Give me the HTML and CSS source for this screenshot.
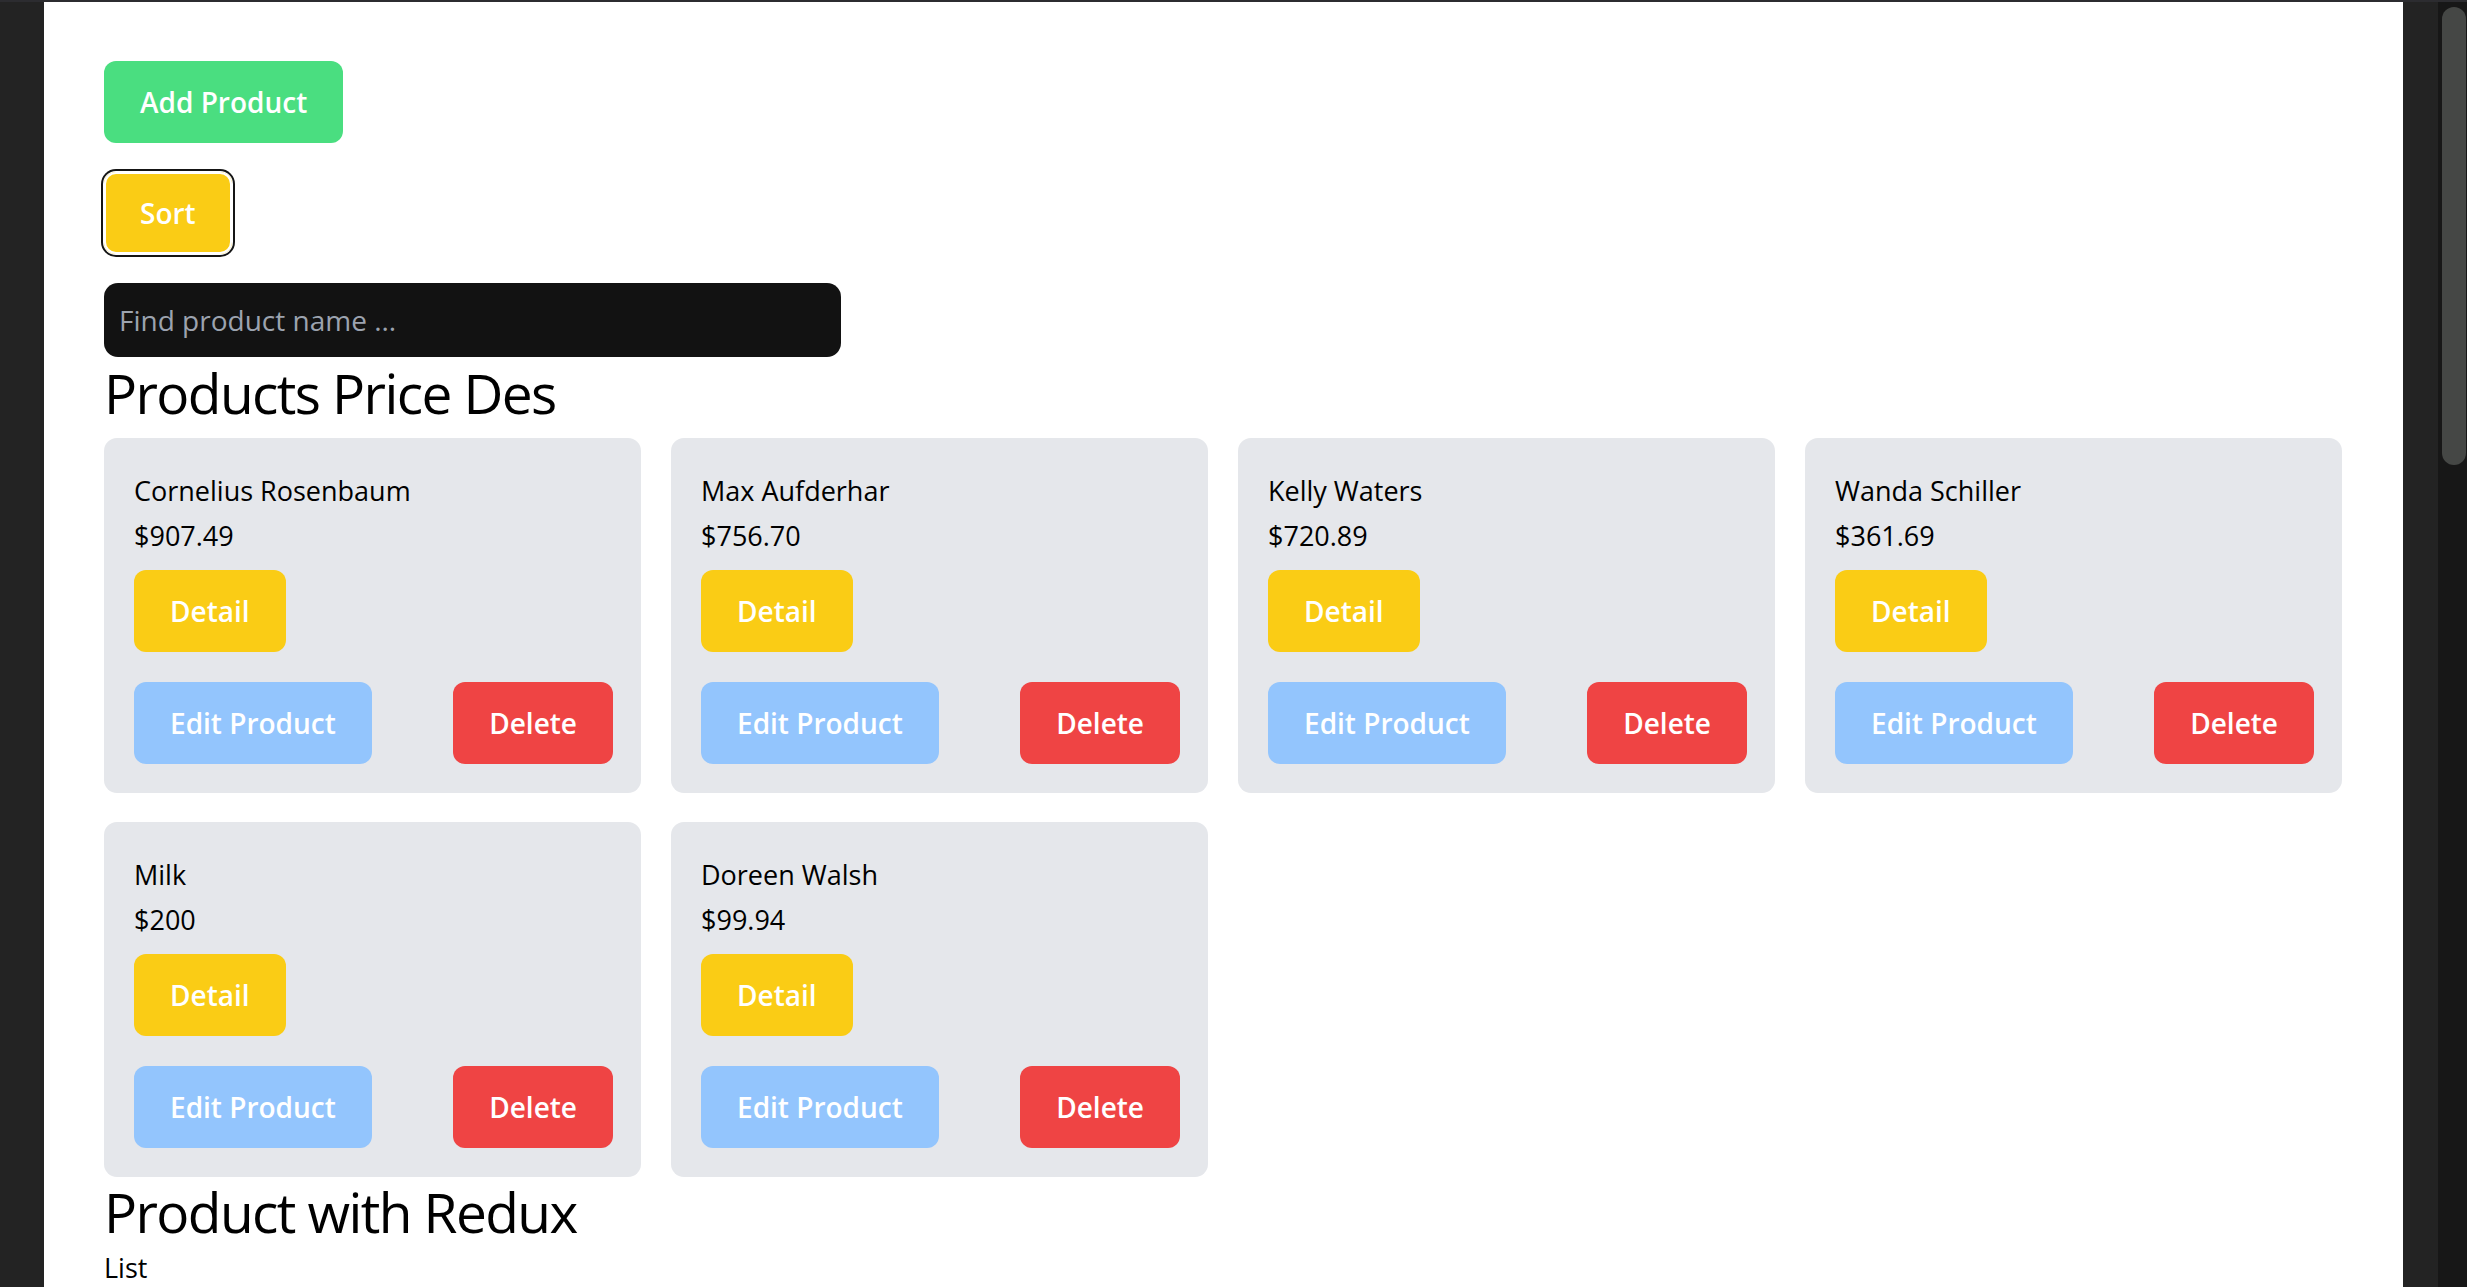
FILE: index.html
```html
<!DOCTYPE html>
<html lang="en">
<head>
<meta charset="utf-8">
<title>Products</title>
<link rel="stylesheet" href="styles.css">
</head>
<body>
<div class="window">
  <div class="gutter"></div>
  <main class="page">
    <div class="toolbar">
      <button class="btn btn-green">Add Product</button>
      <button class="btn btn-yellow btn-focus">Sort</button>
      <input class="search" type="text" placeholder="Find product name ...">
    </div>
    <h1 class="title">Products Price Des</h1>
    <div class="grid">
      <div class="card">
        <p class="line">Cornelius Rosenbaum</p>
        <p class="line">$907.49</p>
        <button class="btn btn-yellow btn-detail">Detail</button>
        <div class="actions">
          <button class="btn btn-blue">Edit Product</button>
          <button class="btn btn-red">Delete</button>
        </div>
      </div>
      <div class="card">
        <p class="line">Max Aufderhar</p>
        <p class="line">$756.70</p>
        <button class="btn btn-yellow btn-detail">Detail</button>
        <div class="actions">
          <button class="btn btn-blue">Edit Product</button>
          <button class="btn btn-red">Delete</button>
        </div>
      </div>
      <div class="card">
        <p class="line">Kelly Waters</p>
        <p class="line">$720.89</p>
        <button class="btn btn-yellow btn-detail">Detail</button>
        <div class="actions">
          <button class="btn btn-blue">Edit Product</button>
          <button class="btn btn-red">Delete</button>
        </div>
      </div>
      <div class="card">
        <p class="line">Wanda Schiller</p>
        <p class="line">$361.69</p>
        <button class="btn btn-yellow btn-detail">Detail</button>
        <div class="actions">
          <button class="btn btn-blue">Edit Product</button>
          <button class="btn btn-red">Delete</button>
        </div>
      </div>
      <div class="card">
        <p class="line">Milk</p>
        <p class="line">$200</p>
        <button class="btn btn-yellow btn-detail">Detail</button>
        <div class="actions">
          <button class="btn btn-blue">Edit Product</button>
          <button class="btn btn-red">Delete</button>
        </div>
      </div>
      <div class="card">
        <p class="line">Doreen Walsh</p>
        <p class="line">$99.94</p>
        <button class="btn btn-yellow btn-detail">Detail</button>
        <div class="actions">
          <button class="btn btn-blue">Edit Product</button>
          <button class="btn btn-red">Delete</button>
        </div>
      </div>
    </div>
    <h1 class="title title-second">Product with Redux</h1>
    <p class="line">List</p>
  </main>
  <div class="side"></div>
  <div class="scrollbar"><div class="thumb"></div></div>
</div>
</body>
</html>
```
FILE: styles.css
```css
* { box-sizing: border-box; }

html, body {
  margin: 0;
  padding: 0;
  height: 100%;
  overflow: hidden;
  background: #232323;
}

body {
  font-family: "Open Sans", "Noto Sans", sans-serif;
  color: #000;
}

.window {
  display: flex;
  height: 100vh;
  border-top: 2px solid #2c2c30;
}

.gutter {
  width: 44px;
  flex: none;
  background: #232323;
}

.page {
  flex: 1;
  background: #ffffff;
  padding: 59px 59px 0 60px;
  overflow: hidden;
}

.side {
  width: 35px;
  flex: none;
  background: #232323;
}

.scrollbar {
  width: 29px;
  flex: none;
  background: #171717;
  padding: 5px 1px 0 4px;
}

.thumb {
  height: 458px;
  background: #454745;
  border-radius: 12px;
}

.toolbar {
  display: flex;
  flex-direction: column;
  align-items: flex-start;
  gap: 29px;
}

.btn {
  display: inline-flex;
  align-items: center;
  justify-content: center;
  height: 82px;
  padding: 0 36px;
  border: none;
  border-radius: 12px;
  font-family: "Open Sans", "Noto Sans", sans-serif;
  font-size: 28px;
  font-weight: 600;
  color: #ffffff;
  cursor: pointer;
}

.btn-green { background: #4ade80; }
.btn-yellow { background: #facc15; }
.btn-blue { background: #93c5fd; }
.btn-red { background: #ef4444; }

.btn-focus {
  box-shadow: inset 0 0 0 2px #ffffff, 0 0 0 1px #ffffff, 0 0 0 3px #151515;
}

.search {
  width: 737px;
  height: 74px;
  border: none;
  border-radius: 14px;
  background: #121212;
  padding: 0 15px;
  font-family: "Open Sans", "Noto Sans", sans-serif;
  font-size: 28px;
  color: #ffffff;
  outline: none;
}

.search::placeholder {
  color: #9ca3af;
}

.title {
  margin: 2px 0 12px;
  font-size: 55px;
  line-height: 67px;
  font-weight: 400;
  letter-spacing: -1.6px;
}

.title-second {
  margin: 1px 0 0;
}

.grid {
  display: grid;
  grid-template-columns: repeat(4, 537px);
  column-gap: 30px;
  row-gap: 29px;
}

.card {
  background: #e5e7eb;
  border-radius: 13px;
  padding: 30px 28px 29px 30px;
  display: flex;
  flex-direction: column;
  align-items: flex-start;
}

.line {
  margin: 0;
  font-size: 27px;
  line-height: 45px;
}

.btn-detail {
  margin-top: 12px;
}

.actions {
  align-self: stretch;
  display: flex;
  justify-content: space-between;
  margin-top: 30px;
}
```
